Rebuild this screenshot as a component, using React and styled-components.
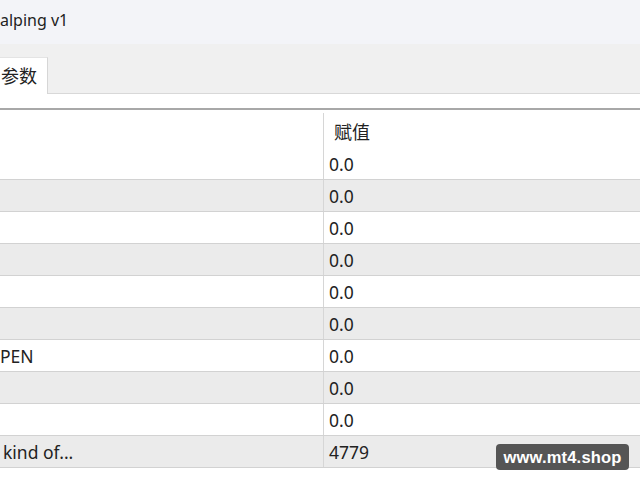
import React from "react";
import styled, { createGlobalStyle } from "styled-components";

const Global = createGlobalStyle`
  html, body { margin: 0; padding: 0; background: #ffffff; }
  body {
    width: 640px; height: 480px; overflow: hidden;
    font-family: "Noto Sans", "Open Sans", "Noto Sans CJK SC", sans-serif;
    color: #1a1a1a;
  }
`;

const Page = styled.div`
  position: relative;
  width: 640px;
  height: 480px;
  display: flex;
  flex-direction: column;
  background: #ffffff;
`;

const TitleBar = styled.div`
  height: 44px;
  background: #f3f4f8;
  display: flex;
  align-items: center;
  padding-bottom: 4px;
  box-sizing: border-box;
  font-size: 16px;
  color: #222;
`;

const TabStrip = styled.div`
  height: 50px;
  background: #f0f0f0;
  display: flex;
  align-items: flex-end;
  box-sizing: border-box;
`;

const Tab = styled.div`
  width: 48px;
  height: 37px;
  background: #ffffff;
  border-right: 1px solid #d6d6d6;
  border-top: 1px solid #e4e4e4;
  box-sizing: border-box;
  display: flex;
  align-items: center;
  padding-left: 1px;
  padding-bottom: 3px;
  font-size: 18px;
  font-family: "Noto Sans CJK SC", sans-serif;
  color: #222;
`;

const StripRest = styled.div`
  flex: 1;
  height: 1px;
  background: #d8d8d8;
`;

const Spacer = styled.div`
  height: 14px;
  background: #ffffff;
`;

const Table = styled.div`
  border-top: 2px solid #a8a8a8;
  display: flex;
  flex-direction: column;
`;

const Row = styled.div`
  display: grid;
  grid-template-columns: 323px 1fr;
  height: ${(p) => (p.$header ? "38px" : "32px")};
  box-sizing: border-box;
  background: ${(p) => (p.$alt ? "#ebebeb" : "#ffffff")};
  border-bottom: ${(p) => (p.$header ? "none" : "1px solid #d2d2d2")};
  font-size: 17.5px;
`;

const NameCell = styled.div`
  display: flex;
  align-items: center;
  padding-left: ${(p) => p.$indent || 0}px;
  white-space: nowrap;
  overflow: hidden;
  color: #222;
`;

const ValueCell = styled.div`
  display: flex;
  align-items: center;
  padding-left: ${(p) => (p.$header ? 10 : 5)}px;
  border-left: 1px solid #d6d6d6;
  margin-top: ${(p) => (p.$header ? "3px" : "0")};
  color: #222;
  font-size: ${(p) => (p.$header ? "18px" : "17.5px")};
  font-family: ${(p) =>
    p.$header ? '"Noto Sans CJK SC", sans-serif' : '"Noto Sans", "Open Sans", sans-serif'};
`;

const Watermark = styled.div`
  position: absolute;
  left: 496px;
  top: 444px;
  width: 133px;
  height: 26px;
  border-radius: 4px;
  background: #555555;
  color: #ffffff;
  font-family: "Liberation Sans", Arial, sans-serif;
  font-weight: bold;
  font-size: 16.5px;
  display: flex;
  align-items: center;
  justify-content: center;
  letter-spacing: 0.2px;
`;

const rows = [
  { name: "", value: "0.0" },
  { name: "", value: "0.0" },
  { name: "", value: "0.0" },
  { name: "", value: "0.0" },
  { name: "", value: "0.0" },
  { name: "", value: "0.0" },
  { name: "PEN", value: "0.0" },
  { name: "", value: "0.0" },
  { name: "", value: "0.0" },
  { name: "kind of...", value: "4779", indent: 3 },
];

export default function App() {
  return (
    <>
      <Global />
      <Page>
        <TitleBar>alping v1</TitleBar>
        <TabStrip>
          <Tab>参数</Tab>
          <StripRest />
        </TabStrip>
        <Spacer />
        <Table>
          <Row $header>
            <NameCell />
            <ValueCell $header>赋值</ValueCell>
          </Row>
          {rows.map((r, i) => (
            <Row key={i} $alt={i % 2 === 1}>
              <NameCell $indent={r.indent}>{r.name}</NameCell>
              <ValueCell>{r.value}</ValueCell>
            </Row>
          ))}
        </Table>
        <Watermark>www.mt4.shop</Watermark>
      </Page>
    </>
  );
}
